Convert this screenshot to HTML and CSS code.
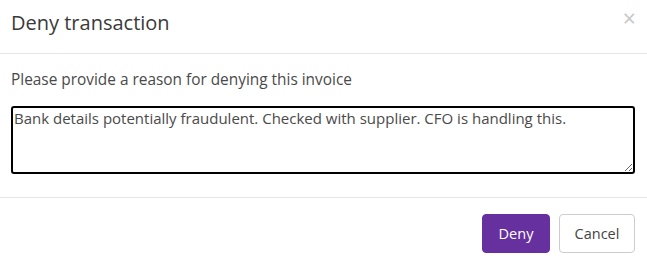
FILE: index.html
```html
<!DOCTYPE html>
<html>
<head>
<meta charset="utf-8">
<link rel="stylesheet" href="styles.css">
</head>
<body>
<div class="modal">
  <div class="modal-header">
    <h4 class="modal-title">Deny transaction</h4>
    <button class="close" type="button">×</button>
  </div>
  <div class="modal-body">
    <label class="reason-label" for="reason">Please provide a reason for denying this invoice</label>
    <textarea id="reason" class="reason">Bank details potentially fraudulent. Checked with supplier. CFO is handling this.</textarea>
  </div>
  <div class="modal-footer">
    <button class="btn btn-primary" type="button">Deny</button>
    <button class="btn btn-default" type="button">Cancel</button>
  </div>
</div>
</body>
</html>
```
FILE: styles.css
```css
html, body {
  margin: 0;
  padding: 0;
  background: #fff;
}
body {
  font-family: "Open Sans", "Liberation Sans", sans-serif;
  font-size: 15px;
  color: #333;
}
.modal {
  width: 647px;
  height: 267px;
  display: flex;
  flex-direction: column;
}
.modal-header {
  height: 54px;
  box-sizing: border-box;
  border-bottom: 1px solid #e5e5e5;
  display: flex;
  align-items: flex-start;
  justify-content: space-between;
  padding: 9px 11px 0 11px;
}
.modal-title {
  margin: 0;
  font-size: 20px;
  font-weight: 400;
  line-height: 28px;
  color: #3a3a3a;
}
.close {
  border: 0;
  background: none;
  padding: 0;
  margin: 0;
  font-family: "Open Sans", sans-serif;
  font-size: 23px;
  line-height: 18px;
  color: #c7c7c7;
  cursor: pointer;
}
.modal-body {
  padding: 16px 11px 0 11px;
  height: 144px;
  box-sizing: border-box;
  border-bottom: 1px solid #e5e5e5;
}
.reason-label {
  display: block;
  font-size: 15.4px;
  line-height: 20px;
  color: #4a4a4a;
  margin-bottom: 16px;
}
.reason {
  display: block;
  box-sizing: border-box;
  width: 624px;
  height: 68px;
  border: 2px solid #000;
  border-radius: 3px;
  padding: 0 1px;
  margin: 0;
  font-family: "Open Sans", sans-serif;
  font-size: 15px;
  line-height: 20px;
  color: #4a4a4a;
  outline: none;
  resize: vertical;
}
.modal-footer {
  flex: 1;
  display: flex;
  justify-content: flex-end;
  align-items: flex-start;
  gap: 9px;
  padding: 16px 12px 0 0;
}
.btn {
  height: 39px;
  box-sizing: border-box;
  border-radius: 4px;
  font-family: "Open Sans", sans-serif;
  font-size: 14.5px;
  padding: 0;
  cursor: pointer;
}
.btn-primary {
  background: #66309e;
  color: #fff;
  border: 1px solid #66309e;
  width: 68px;
}
.btn-default {
  background: #fff;
  color: #444;
  border: 1px solid #ccc;
  width: 76px;
}
```
